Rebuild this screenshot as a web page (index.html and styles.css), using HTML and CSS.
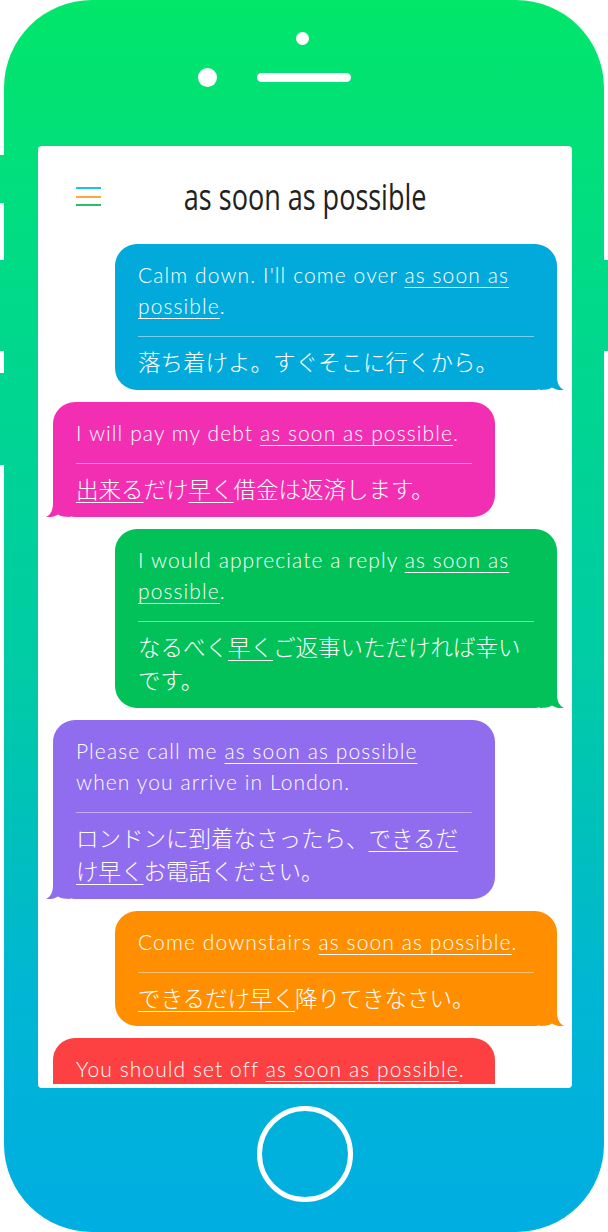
FILE: index.html
```html
<!DOCTYPE html>
<html lang="ja">
<head>
<meta charset="utf-8">
<title>as soon as possible</title>
<link rel="stylesheet" href="styles.css">
</head>
<body>
<div class="device">
  <span class="side-btn l1"></span>
  <span class="side-btn l2"></span>
  <span class="side-btn l3"></span>
  <span class="side-btn r1"></span>

  <div class="camera-row"><span class="camera"></span></div>
  <div class="sensor-row"><span class="sensor"></span><span class="speaker"></span></div>

  <div class="screen">
    <header class="header">
      <div class="menu">
        <span class="line blue"></span>
        <span class="line orange"></span>
        <span class="line green"></span>
      </div>
      <h1 class="title"><span class="title-text">as soon as possible</span></h1>
      <div></div>
    </header>

    <div class="messages">
      <div class="bubble right c-blue">
        <p class="en">Calm down. I'll come over <u>as soon as possible</u>.</p>
        <hr class="rule">
        <p class="jp">落ち着けよ。すぐそこに行くから。</p>
      </div>
      <div class="bubble left c-pink">
        <p class="en">I will pay my debt <u>as soon as possible</u>.</p>
        <hr class="rule">
        <p class="jp"><u>出来る</u>だけ<u>早く</u>借金は返済します。</p>
      </div>
      <div class="bubble right c-green">
        <p class="en">I would appreciate a reply <u>as soon as possible</u>.</p>
        <hr class="rule">
        <p class="jp">なるべく<u>早く</u>ご返事いただければ幸いです。</p>
      </div>
      <div class="bubble left c-purple">
        <p class="en">Please call me <u>as soon as possible</u> when you arrive in London.</p>
        <hr class="rule">
        <p class="jp">ロンドンに到着なさったら、<u>できるだけ早く</u>お電話ください。</p>
      </div>
      <div class="bubble right c-orange">
        <p class="en">Come downstairs <u>as soon as possible</u>.</p>
        <hr class="rule">
        <p class="jp"><u>できるだけ早く</u>降りてきなさい。</p>
      </div>
      <div class="bubble left c-red">
        <p class="en">You should set off <u>as soon as possible</u>.</p>
        <hr class="rule">
        <p class="jp">できるだけ早く出発したほうがいい。</p>
      </div>
    </div>
  </div>

  <div class="home"></div>
</div>
</body>
</html>
```

FILE: styles.css
```css
* { box-sizing: border-box; }

html, body {
  margin: 0;
  padding: 0;
  background: #ffffff;
}

body {
  width: 608px;
  height: 1232px;
  overflow: hidden;
  font-family: "Lato", "Noto Sans CJK JP", sans-serif;
}

.device {
  --grad: linear-gradient(180deg, #02e66a 0%, #00d98a 25%, #00cba6 55%, #00b6d2 80%, #00aee2 100%);
  position: relative;
  margin-left: 4px;
  width: 600px;
  height: 1232px;
  border-radius: 88px;
  background: var(--grad);
  display: flex;
  flex-direction: column;
}

.side-btn {
  position: absolute;
  width: 5px;
  background: var(--grad);
  background-size: 5px 1232px;
}
.side-btn.l1 { left: -4px; top: 155px; height: 48px; background-position: 0 -155px; }
.side-btn.l2 { left: -4px; top: 260px; height: 91px; background-position: 0 -260px; }
.side-btn.l3 { left: -4px; top: 373px; height: 92px; background-position: 0 -373px; }
.side-btn.r1 { right: -4px; top: 260px; height: 91px; background-position: 0 -260px; }

.camera-row {
  padding: 32px 0 0 292px;
  display: flex;
}
.camera {
  width: 13px;
  height: 13px;
  border-radius: 50%;
  background: #ffffff;
}

.sensor-row {
  margin-top: 23px;
  padding-left: 194px;
  display: flex;
  align-items: center;
  gap: 40px;
}
.sensor {
  width: 19px;
  height: 19px;
  border-radius: 50%;
  background: #ffffff;
}
.speaker {
  width: 94px;
  height: 9px;
  border-radius: 5px;
  background: #ffffff;
}

.screen {
  margin: 59px 32px 0 34px;
  height: 942px;
  background: #ffffff;
  border-radius: 4px;
  display: flex;
  flex-direction: column;
  padding-bottom: 4px;
  overflow: hidden;
}

.header {
  height: 98px;
  flex: none;
  display: grid;
  grid-template-columns: 1fr auto 1fr;
  align-items: start;
  padding-top: 31px;
}

.menu {
  margin: 10px 0 0 38px;
  width: 25px;
  display: flex;
  flex-direction: column;
  gap: 6.5px;
}
.menu .line {
  display: block;
  height: 2px;
}
.line.blue { background: #1ec0f2; }
.line.orange { background: #ffa63c; }
.line.green { background: #2dbb68; }

.title {
  margin: 0;
  font-family: "Open Sans", sans-serif;
  font-weight: 400;
  font-size: 37px;
  line-height: 38px;
  color: #222222;
  white-space: nowrap;
}
.title-text {
  display: inline-block;
  transform: scaleX(0.73);
}

.messages {
  flex: 1;
  min-height: 0;
  overflow: hidden;
  display: flex;
  flex-direction: column;
  gap: 12px;
  padding: 0 15px;
}

.bubble {
  position: relative;
  flex: none;
  width: 442px;
  padding: 15px 23px 12.5px;
  border-radius: 22px;
  background: var(--c);
  color: #ffffff;
}
.bubble.right { align-self: flex-end; }
.bubble.left { align-self: flex-start; }

.bubble::after {
  content: "";
  position: absolute;
  bottom: 0;
  width: 24px;
  height: 24px;
  background: var(--c);
  clip-path: path('M0 0H17V10C17 17 19 21.5 24 24C19.5 24.6 15 23.6 12 21.6C9 23.4 5 24 0 24Z');
}
.bubble.right::after { right: -7px; }
.bubble.left::after { left: -7px; transform: scaleX(-1); }

.c-blue { --c: #02aadb; }
.c-pink { --c: #f22fb3; }
.c-green { --c: #02c159; }
.c-purple { --c: #906cef; }
.c-orange { --c: #ff8f00; }
.c-red { --c: #fd4041; }

.en {
  margin: 0 0 14.5px;
  font-family: "Lato", sans-serif;
  font-weight: 300;
  font-size: 21px;
  letter-spacing: 1.1px;
  line-height: 31px;
}

.rule {
  margin: 0;
  border: none;
  height: 1px;
  background: rgba(255, 255, 255, 0.45);
}

.jp {
  margin: 8px 0 0;
  font-family: "Noto Sans CJK JP", sans-serif;
  font-weight: 300;
  font-size: 22.5px;
  line-height: 33px;
}

u {
  text-decoration: underline;
  text-decoration-thickness: 1px;
  text-underline-offset: 4px;
}

.home {
  margin: 18px 0 0 253px;
  width: 96px;
  height: 96px;
  border-radius: 50%;
  border: 5px solid #ffffff;
}
```
